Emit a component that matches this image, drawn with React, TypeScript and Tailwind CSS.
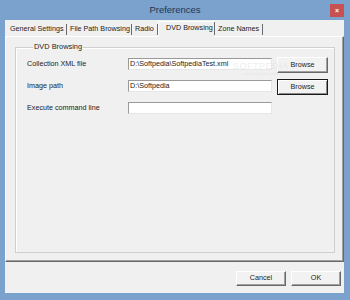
import React from "react"

const tabs = [
  { label: "General Settings", w: "w-[60px]" },
  { label: "File Path Browsing", w: "w-[65px]" },
  { label: "Radio", w: "w-[26px]" },
  { label: "DVD Browsing", w: "w-[57px]", active: true },
  { label: "Zone Names", w: "w-[48px]" },
]

function ClassicButton({ children, focused = false, className = "" }: { children: React.ReactNode; focused?: boolean; className?: string }) {
  if (focused) {
    return (
      <div className={"border border-[#1a1a1a] bg-[#f2f2f2] " + className}>
        <div className="w-full h-full flex items-center justify-center shadow-[inset_1px_1px_0_#ffffff,inset_-1px_-1px_0_#8a8a8a]">
          {children}
        </div>
      </div>
    )
  }
  return (
    <div
      className={
        "flex items-center justify-center bg-[#f2f2f2] border-t border-l border-t-white border-l-white border-r border-b border-r-[#696969] border-b-[#696969] shadow-[inset_-1px_-1px_0_#a0a0a0] " +
        className
      }
    >
      {children}
    </div>
  )
}

function TextBox({ value = "" }: { value?: string }) {
  return (
    <div className="w-[144px] h-[12px] mt-[1px] bg-white border border-[#9a9a9a] border-r-[#e6e6e6] border-b-[#e6e6e6] pl-[1px] leading-[10px] whitespace-nowrap overflow-hidden">
      {value}
    </div>
  )
}

export default function App() {
  return (
    <div className="relative w-[350px] h-[300px] bg-[#7ba2cd] flex flex-col text-[7.2px] text-[#222222] font-['Liberation_Sans',Arial,sans-serif]">
      {/* Title bar */}
      <div className="h-[20px] flex items-center">
        <div className="w-[20px]" />
        <div className="flex-1 text-center text-[9.5px] text-[#1f3550]">Preferences</div>
        <div className="w-[14px] h-[13px] mr-[6px] bg-[#c75050] flex items-center justify-center text-white text-[7px] font-bold leading-none">
          ×
        </div>
      </div>

      {/* Client area */}
      <div className="ml-[5px] mr-[6px] h-[273px] bg-[#f0f0f0] flex flex-col">
        {/* Tab strip */}
        <div className="h-[16px] flex items-end pl-[2px]">
          {tabs.map((t) =>
            t.active ? (
              <div
                key={t.label}
                className={t.w + " h-[16px] -mb-[1px] relative z-10 bg-[#f0f0f0] border-t border-l border-white flex items-center pl-[7px] pb-[2px] whitespace-nowrap"}
              >
                <span className="flex-1">{t.label}</span>
                <div className="w-[1px] h-[13px] bg-[#696969]" />
              </div>
            ) : (
              <div key={t.label} className={t.w + " h-[14px] flex items-center pl-[3px] whitespace-nowrap"}>
                <span className="flex-1">{t.label}</span>
                <div className="w-[1px] h-[11px] bg-[#6b6b6b]" />
              </div>
            )
          )}
        </div>

        {/* Tab panel */}
        <div className="h-[226px] border-t border-l border-white border-r border-b border-r-[#696969] border-b-[#696969] shadow-[inset_-1px_-1px_0_#a0a0a0] flex flex-col">
          <fieldset className="mt-[5px] ml-[9px] w-[320px] h-[211px] border border-[#cfcfcf] shadow-[inset_1px_1px_0_#ffffff] pl-[11px] pt-[5px]">
            <legend className="ml-[6px] px-[1px] leading-[10px] text-[7.4px]">DVD Browsing</legend>

            <div className="flex items-start h-[22px]">
              <div className="w-[101px] leading-[12px] mt-[1px]">Collection XML file</div>
              <TextBox value="D:\Softpedia\SoftpediaTest.xml" />
              <ClassicButton className="ml-[5px] w-[51px] h-[16px]">Browse</ClassicButton>
            </div>
            <div className="flex items-start h-[22px]">
              <div className="w-[101px] leading-[12px] mt-[1px]">Image path</div>
              <TextBox value="D:\Softpedia" />
              <ClassicButton focused className="ml-[5px] w-[51px] h-[16px]">Browse</ClassicButton>
            </div>
            <div className="flex items-start h-[22px]">
              <div className="w-[101px] leading-[12px] mt-[1px]">Execute command line</div>
              <TextBox />
            </div>
          </fieldset>
        </div>

        {/* Dialog buttons */}
        <div className="flex justify-end gap-[5px] pt-[9px] pr-[3px]">
          <ClassicButton className="w-[50px] h-[15px]">Cancel</ClassicButton>
          <ClassicButton className="w-[50px] h-[15px]">OK</ClassicButton>
        </div>
      </div>

      {/* faint screenshot watermark */}
      <div className="absolute left-[233px] top-[61px] pointer-events-none flex flex-col items-center text-[#dcdcdc]/50">
        <span className="text-[9px] tracking-[0.5px] leading-[10px]">SOFTPEDIA</span>
        <span className="text-[4px] leading-[5px]">www.softpedia.com</span>
      </div>
    </div>
  )
}
